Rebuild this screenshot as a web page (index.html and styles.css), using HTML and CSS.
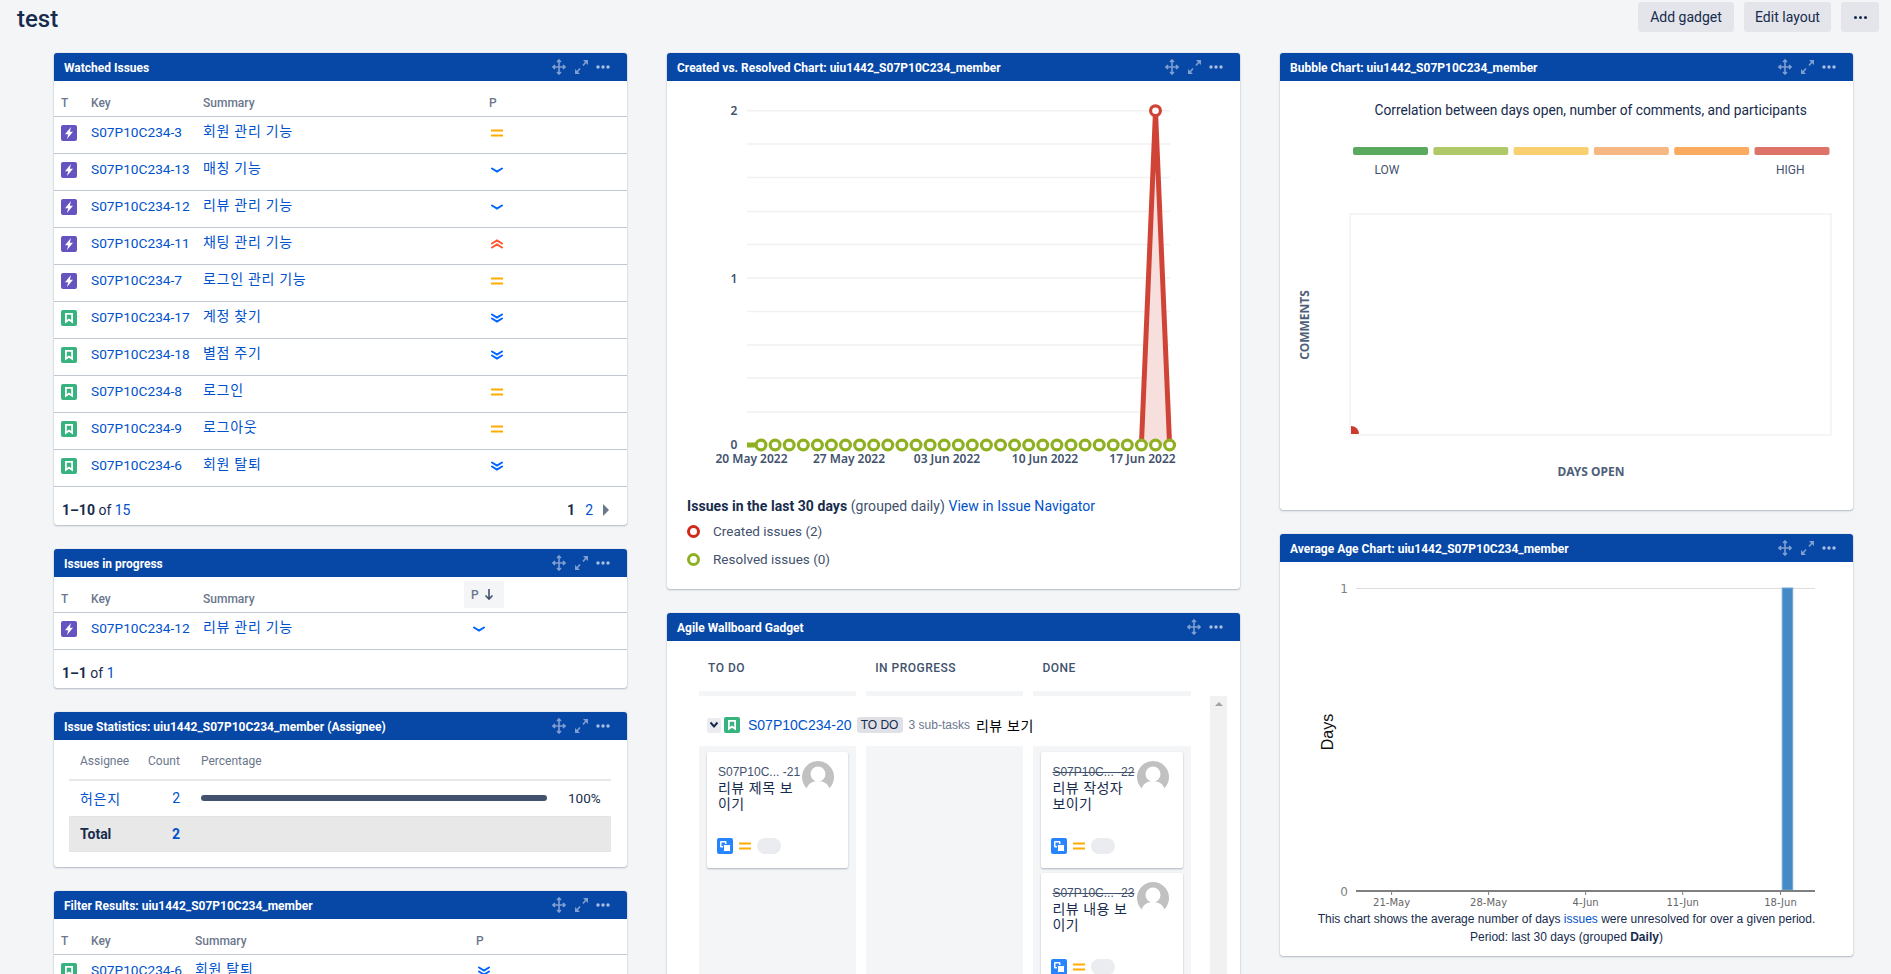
FILE: index.html
```html
<!DOCTYPE html>
<html lang="ko">
<head>
    <meta charset="UTF-8">
    <meta name="viewport" content="width=device-width, initial-scale=1.0">
    <title>test - Dashboard</title>
    <link rel="stylesheet" href="styles.css">
</head>
<body>
    <svg class="icon-defs" aria-hidden="true">
        <symbol id="i-epic" viewBox="0 0 16 16"><rect width="16" height="16" rx="2" fill="#6554c0"/><path d="M10 2 4 9.200h3.200L6 14l6-7.200H8.800z" fill="#fff"/></symbol>
        <symbol id="i-story" viewBox="0 0 16 16"><rect width="16" height="16" rx="2" fill="#36b37e"/><path d="M4 3h8v10.500L8 10.800 4 13.500z" fill="#fff"/><path d="M5.800 4.700h4.400v5.300L8 8.500 5.800 10z" fill="#36b37e"/></symbol>
        <symbol id="i-sub" viewBox="0 0 16 16"><rect width="16" height="16" rx="2" fill="#2684ff"/><rect x="3" y="3" width="6.500" height="6.500" rx="1" fill="#fff"/><rect x="4.500" y="4.500" width="3.500" height="3.500" fill="#2684ff"/><rect x="6.500" y="6.500" width="7" height="7" rx="1" fill="#fff" stroke="#2684ff"/></symbol>
        <symbol id="p-medium" viewBox="0 0 12 12"><path d="M0 2.500h12v2H0zM0 7.500h12v2H0z" fill="#ffab00"/></symbol>
        <symbol id="p-low" viewBox="0 0 12 12"><path d="M1 4.500l5 3 5-3" fill="none" stroke="#0065ff" stroke-width="2" stroke-linecap="round"/></symbol>
        <symbol id="p-lowest" viewBox="0 0 12 12"><path d="M1 2.500l5 3 5-3M1 6.500l5 3 5-3" fill="none" stroke="#0065ff" stroke-width="2" stroke-linecap="round"/></symbol>
        <symbol id="p-highest" viewBox="0 0 12 12"><path d="M1 5.500l5-3 5 3M1 9.500l5-3 5 3" fill="none" stroke="#ff5630" stroke-width="2" stroke-linecap="round"/></symbol>
        <symbol id="h-move" viewBox="0 0 14 16"><path d="M7 1v14M1 8h12M5 3l2-2 2 2M5 13l2 2 2-2M3 6 1 8l2 2M11 6l2 2-2 2" fill="none" stroke="#7f9fd2" stroke-width="1.600"/></symbol>
        <symbol id="h-expand" viewBox="0 0 15 16"><path d="M9 1h5v5zM6 15H1v-5z" fill="#7f9fd2"/><path d="M12 3 9 6.500M3 13l3-3.500" stroke="#7f9fd2" stroke-width="1.600"/></symbol>
        <symbol id="h-dots" viewBox="0 0 14 6"><circle cx="2" cy="3" r="1.700" fill="#a9bfe2"/><circle cx="7" cy="3" r="1.700" fill="#a9bfe2"/><circle cx="12" cy="3" r="1.700" fill="#a9bfe2"/></symbol>
        <symbol id="avatar" viewBox="0 0 32 32"><circle cx="16" cy="16" r="16" fill="#c1c1c1"/><circle cx="16" cy="13" r="7.500" fill="#fff"/><path d="M4 32c0-8 5-12 12-12s12 4 12 12z" fill="#fff"/></symbol>
    </svg>

    <div class="page">
        <div class="top-bar">
            <h1>test</h1>
            <div class="top-actions">
                <button class="btn btn-add">Add gadget</button>
                <button class="btn btn-edit">Edit layout</button>
                <button class="btn btn-more"><span class="more-dots"></span></button>
            </div>
        </div>

        <div class="columns">
            <div class="column">
                <section class="gadget">
                    <div class="gadget-head">
                        <h2>Watched Issues</h2>
                        <svg class="hi-move"><use href="#h-move"/></svg><svg class="hi-expand"><use href="#h-expand"/></svg><svg class="hi-dots"><use href="#h-dots"/></svg>
                    </div>
                    <table class="issues">
                        <colgroup><col class="c-t"><col class="c-key"><col class="c-sum"><col></colgroup>
                        <tr><th>T</th><th>Key</th><th>Summary</th><th>P</th></tr>
                        <tr><td><svg class="type"><use href="#i-epic"/></svg></td><td><a>S07P10C234-3</a></td><td><a class="ko">회원 관리 기능</a></td><td><svg class="prio"><use href="#p-medium"/></svg></td></tr>
                        <tr><td><svg class="type"><use href="#i-epic"/></svg></td><td><a>S07P10C234-13</a></td><td><a class="ko">매칭 기능</a></td><td><svg class="prio"><use href="#p-low"/></svg></td></tr>
                        <tr><td><svg class="type"><use href="#i-epic"/></svg></td><td><a>S07P10C234-12</a></td><td><a class="ko">리뷰 관리 기능</a></td><td><svg class="prio"><use href="#p-low"/></svg></td></tr>
                        <tr><td><svg class="type"><use href="#i-epic"/></svg></td><td><a>S07P10C234-11</a></td><td><a class="ko">채팅 관리 기능</a></td><td><svg class="prio"><use href="#p-highest"/></svg></td></tr>
                        <tr><td><svg class="type"><use href="#i-epic"/></svg></td><td><a>S07P10C234-7</a></td><td><a class="ko">로그인 관리 기능</a></td><td><svg class="prio"><use href="#p-medium"/></svg></td></tr>
                        <tr><td><svg class="type"><use href="#i-story"/></svg></td><td><a>S07P10C234-17</a></td><td><a class="ko">계정 찾기</a></td><td><svg class="prio"><use href="#p-lowest"/></svg></td></tr>
                        <tr><td><svg class="type"><use href="#i-story"/></svg></td><td><a>S07P10C234-18</a></td><td><a class="ko">별점 주기</a></td><td><svg class="prio"><use href="#p-lowest"/></svg></td></tr>
                        <tr><td><svg class="type"><use href="#i-story"/></svg></td><td><a>S07P10C234-8</a></td><td><a class="ko">로그인</a></td><td><svg class="prio"><use href="#p-medium"/></svg></td></tr>
                        <tr><td><svg class="type"><use href="#i-story"/></svg></td><td><a>S07P10C234-9</a></td><td><a class="ko">로그아웃</a></td><td><svg class="prio"><use href="#p-medium"/></svg></td></tr>
                        <tr><td><svg class="type"><use href="#i-story"/></svg></td><td><a>S07P10C234-6</a></td><td><a class="ko">회원 탈퇴</a></td><td><svg class="prio"><use href="#p-lowest"/></svg></td></tr>
                    </table>
                    <div class="table-foot">
                        <span><b>1–10</b> of <a>15</a></span>
                        <span class="pager"><b>1</b><a>2</a><i class="pager-next"></i></span>
                    </div>
                </section>

                <section class="gadget">
                    <div class="gadget-head">
                        <h2>Issues in progress</h2>
                        <svg class="hi-move"><use href="#h-move"/></svg><svg class="hi-expand"><use href="#h-expand"/></svg><svg class="hi-dots"><use href="#h-dots"/></svg>
                    </div>
                    <table class="issues issues-sorted">
                        <colgroup><col class="c-t"><col class="c-key"><col class="c-sum-s"><col></colgroup>
                        <tr><th>T</th><th>Key</th><th>Summary</th><th><span class="sorted">P <svg width="10" height="13" viewBox="0 0 10 13"><path d="M5 1v10M1.500 7.500 5 11l3.500-3.500" fill="none" stroke="#42526e" stroke-width="1.600"/></svg></span></th></tr>
                        <tr><td><svg class="type"><use href="#i-epic"/></svg></td><td><a>S07P10C234-12</a></td><td><a class="ko">리뷰 관리 기능</a></td><td class="p-sorted"><svg class="prio"><use href="#p-low"/></svg></td></tr>
                    </table>
                    <div class="table-foot">
                        <span><b>1–1</b> of <a>1</a></span>
                    </div>
                </section>

                <section class="gadget">
                    <div class="gadget-head">
                        <h2>Issue Statistics: uiu1442_S07P10C234_member (Assignee)</h2>
                        <svg class="hi-move"><use href="#h-move"/></svg><svg class="hi-expand"><use href="#h-expand"/></svg><svg class="hi-dots"><use href="#h-dots"/></svg>
                    </div>
                    <div class="stats">
                        <div class="stats-row stats-head"><span>Assignee</span><span>Count</span><span>Percentage</span></div>
                        <div class="stats-row stats-body"><a class="ko">허은지</a><a class="num">2</a><span class="bar"></span><span class="pct">100%</span></div>
                        <div class="stats-row stats-total"><b>Total</b><a class="num"><b>2</b></a></div>
                    </div>
                </section>

                <section class="gadget">
                    <div class="gadget-head">
                        <h2>Filter Results: uiu1442_S07P10C234_member</h2>
                        <svg class="hi-move"><use href="#h-move"/></svg><svg class="hi-expand"><use href="#h-expand"/></svg><svg class="hi-dots"><use href="#h-dots"/></svg>
                    </div>
                    <table class="issues">
                        <colgroup><col class="c-t"><col class="c-key-f"><col class="c-sum-f"><col></colgroup>
                        <tr><th>T</th><th>Key</th><th>Summary</th><th>P</th></tr>
                        <tr><td><svg class="type"><use href="#i-story"/></svg></td><td><a>S07P10C234-6</a></td><td><a class="ko">회원 탈퇴</a></td><td><svg class="prio"><use href="#p-lowest"/></svg></td></tr>
                    </table>
                </section>
            </div>

            <div class="column">
                <section class="gadget">
                    <div class="gadget-head">
                        <h2>Created vs. Resolved Chart: uiu1442_S07P10C234_member</h2>
                        <svg class="hi-move"><use href="#h-move"/></svg><svg class="hi-expand"><use href="#h-expand"/></svg><svg class="hi-dots"><use href="#h-dots"/></svg>
                    </div>
                    <svg class="chart-created" width="573" height="400" viewBox="0 0 573 400">
                        <g stroke="#f1f1f1" stroke-width="1.500">
                            <path d="M80 29.700H503M80 63H503M80 96.500H503M80 130.400H503M80 163.600H503M80 197H503M80 230.400H503M80 264H503M80 297H503M80 331H503"/>
                        </g>
                        <polygon points="474.400,364 488.500,30 502.600,364" fill="#f6dfdd"/>
                        <polyline points="474.400,364 488.500,30 502.600,364" fill="none" stroke="#d04437" stroke-width="5"/>
                        <circle cx="488.500" cy="29.700" r="4.900" fill="#fff" stroke="#d04437" stroke-width="3.200"/>
                        <path d="M80 364H94" stroke="#8eb021" stroke-width="5"/>
                        <g fill="#fff" stroke="#8eb021" stroke-width="3.200">
                            <circle cx="94" cy="364" r="4.900"/><circle cx="108.100" cy="364" r="4.900"/><circle cx="122.200" cy="364" r="4.900"/><circle cx="136.300" cy="364" r="4.900"/><circle cx="150.400" cy="364" r="4.900"/><circle cx="164.400" cy="364" r="4.900"/>
                            <circle cx="178.500" cy="364" r="4.900"/><circle cx="192.600" cy="364" r="4.900"/><circle cx="206.700" cy="364" r="4.900"/><circle cx="220.800" cy="364" r="4.900"/><circle cx="234.900" cy="364" r="4.900"/><circle cx="249" cy="364" r="4.900"/>
                            <circle cx="263.100" cy="364" r="4.900"/><circle cx="277.200" cy="364" r="4.900"/><circle cx="291.300" cy="364" r="4.900"/><circle cx="305.300" cy="364" r="4.900"/><circle cx="319.400" cy="364" r="4.900"/><circle cx="333.500" cy="364" r="4.900"/>
                            <circle cx="347.600" cy="364" r="4.900"/><circle cx="361.700" cy="364" r="4.900"/><circle cx="375.800" cy="364" r="4.900"/><circle cx="389.900" cy="364" r="4.900"/><circle cx="404" cy="364" r="4.900"/><circle cx="418.100" cy="364" r="4.900"/>
                            <circle cx="432.200" cy="364" r="4.900"/><circle cx="446.200" cy="364" r="4.900"/><circle cx="460.300" cy="364" r="4.900"/><circle cx="474.400" cy="364" r="4.900"/><circle cx="488.500" cy="364" r="4.900"/><circle cx="502.600" cy="364" r="4.900"/>
                        </g>
                        <g class="chart-y" text-anchor="middle">
                            <text x="67" y="34">2</text><text x="67" y="201.500">1</text><text x="67" y="368">0</text>
                        </g>
                        <g class="chart-x" text-anchor="middle">
                            <text x="84.500" y="382">20 May 2022</text><text x="182" y="382">27 May 2022</text><text x="280" y="382">03 Jun 2022</text><text x="378" y="382">10 Jun 2022</text><text x="475.500" y="382">17 Jun 2022</text>
                        </g>
                    </svg>
                    <div class="chart-legend">
                        <p><b>Issues in the last 30 days</b> <span>(grouped daily)</span> <a>View in Issue Navigator</a></p>
                        <p class="legend-item"><i class="dot dot-red"></i>Created issues (2)</p>
                        <p class="legend-item"><i class="dot dot-green"></i>Resolved issues (0)</p>
                    </div>
                </section>

                <section class="gadget">
                    <div class="gadget-head">
                        <h2>Agile Wallboard Gadget</h2>
                        <svg class="hi-move"><use href="#h-move"/></svg><svg class="hi-dots"><use href="#h-dots"/></svg>
                    </div>
                    <div class="wallboard">
                        <div class="wb-cols wb-heads">
                            <div>TO DO</div><div>IN PROGRESS</div><div>DONE</div>
                        </div>
                        <div class="wb-main">
                            <div class="wb-lanes">
                                <div class="swimlane">
                                    <span class="toggle"><svg width="10" height="8" viewBox="0 0 10 8"><path d="M1.500 1.500 5 5.500l3.500-4" fill="none" stroke="#172b4d" stroke-width="2"/></svg></span>
                                    <svg class="type"><use href="#i-story"/></svg>
                                    <a class="lane-key">S07P10C234-20</a>
                                    <span class="lane-status">TO DO</span>
                                    <span class="lane-subs">3 sub-tasks</span>
                                    <span class="lane-sum">리뷰 보기</span>
                                </div>
                                <div class="wb-cols wb-cells">
                                    <div class="wb-cell">
                                        <div class="wb-card">
                                            <div class="wb-key">S07P10C... -21</div>
                                            <div class="wb-sum">리뷰 제목 보<br>이기</div>
                                            <svg class="wb-avatar"><use href="#avatar"/></svg>
                                            <div class="wb-foot"><svg class="type"><use href="#i-sub"/></svg><svg class="prio"><use href="#p-medium"/></svg><span class="pill"></span></div>
                                        </div>
                                    </div>
                                    <div class="wb-cell"></div>
                                    <div class="wb-cell">
                                        <div class="wb-card">
                                            <div class="wb-key wb-done">S07P10C... -22</div>
                                            <div class="wb-sum">리뷰 작성자<br>보이기</div>
                                            <svg class="wb-avatar"><use href="#avatar"/></svg>
                                            <div class="wb-foot"><svg class="type"><use href="#i-sub"/></svg><svg class="prio"><use href="#p-medium"/></svg><span class="pill"></span></div>
                                        </div>
                                        <div class="wb-card">
                                            <div class="wb-key wb-done">S07P10C... -23</div>
                                            <div class="wb-sum">리뷰 내용 보<br>이기</div>
                                            <svg class="wb-avatar"><use href="#avatar"/></svg>
                                            <div class="wb-foot"><svg class="type"><use href="#i-sub"/></svg><svg class="prio"><use href="#p-medium"/></svg><span class="pill"></span></div>
                                        </div>
                                    </div>
                                </div>
                            </div>
                            <div class="wb-scroll"><i></i></div>
                        </div>
                    </div>
                </section>
            </div>

            <div class="column">
                <section class="gadget">
                    <div class="gadget-head">
                        <h2>Bubble Chart: uiu1442_S07P10C234_member</h2>
                        <svg class="hi-move"><use href="#h-move"/></svg><svg class="hi-expand"><use href="#h-expand"/></svg><svg class="hi-dots"><use href="#h-dots"/></svg>
                    </div>
                    <svg class="chart-bubble" width="573" height="429" viewBox="0 0 573 429">
                        <text class="bubble-title" x="94.500" y="34">Correlation between days open, number of comments, and participants</text>
                        <rect x="73" y="66" width="75" height="8" rx="2" fill="#5ba85f"/>
                        <rect x="153.300" y="66" width="75" height="8" rx="2" fill="#b0c968"/>
                        <rect x="233.600" y="66" width="75" height="8" rx="2" fill="#f8d06f"/>
                        <rect x="313.900" y="66" width="75" height="8" rx="2" fill="#f6b883"/>
                        <rect x="394.200" y="66" width="75" height="8" rx="2" fill="#fbab60"/>
                        <rect x="474.500" y="66" width="75" height="8" rx="2" fill="#dd7369"/>
                        <text class="bubble-scale" x="94.500" y="93">LOW</text>
                        <text class="bubble-scale" x="496" y="93">HIGH</text>
                        <path d="M71 353V345A8 8 0 0 1 79 353Z" fill="#cb3a2e"/>
                        <rect x="70" y="133" width="481" height="221" fill="none" stroke="#f5f5f5" stroke-width="2"/>
                        <text class="bubble-axis" x="311" y="395" text-anchor="middle">DAYS OPEN</text>
                        <text class="bubble-axis" transform="translate(29 244) rotate(-90)" text-anchor="middle">COMMENTS</text>
                    </svg>
                </section>

                <section class="gadget">
                    <div class="gadget-head">
                        <h2>Average Age Chart: uiu1442_S07P10C234_member</h2>
                        <svg class="hi-move"><use href="#h-move"/></svg><svg class="hi-expand"><use href="#h-expand"/></svg><svg class="hi-dots"><use href="#h-dots"/></svg>
                    </div>
                    <svg class="chart-age" width="573" height="348" viewBox="0 0 573 348">
                        <path d="M76 26.500H535" stroke="#ddd"/>
                        <rect x="502.200" y="26" width="10.500" height="302" fill="#4589c6" stroke="#6da7d8"/>
                        <path d="M76 329H535" stroke="#808080" stroke-width="2"/>
                        <path d="M111.600 330v3M208.600 330v3M305.600 330v3M402.700 330v3M500.500 330v3" stroke="#808080"/>
                        <g class="age-y" text-anchor="end"><text x="68" y="31">1</text><text x="68" y="334">0</text></g>
                        <g class="age-x" text-anchor="middle">
                            <text x="111.600" y="344">21-May</text><text x="208.600" y="344">28-May</text><text x="305.600" y="344">4-Jun</text><text x="402.700" y="344">11-Jun</text><text x="500.500" y="344">18-Jun</text>
                        </g>
                        <text class="age-label" transform="translate(53 170) rotate(-90)" text-anchor="middle">Days</text>
                    </svg>
                    <div class="age-caption">
                        <div>This chart shows the average number of days <a>issues</a> were unresolved for over a given period.</div>
                        <div>Period: last 30 days (grouped <b>Daily</b>)</div>
                    </div>
                </section>
            </div>
        </div>
    </div>
</body>
</html>
```

FILE: styles.css
```css
* {
    box-sizing: border-box;
}
html, body {
    margin: 0;
    height: 100%;
}
body {
    background-color: #f4f5f7;
    color: #172b4d;
    font-family: Roboto, "Noto Sans CJK KR", sans-serif;
    font-size: 14px;
}
a {
    color: #0052cc;
}
.icon-defs {
    display: none;
}
.page {
    height: 974px;
    overflow: hidden;
}

/* top bar */
.top-bar {
    display: flex;
    justify-content: space-between;
    height: 53px;
    padding: 2px 12px 0 17px;
}
.top-bar h1 {
    margin: 0;
    font-size: 24px;
    font-weight: 500;
    line-height: 34px;
}
.top-actions {
    display: flex;
    gap: 10px;
}
.btn {
    height: 30px;
    padding: 0;
    border: none;
    border-radius: 3px;
    background-color: #e3e5ea;
    color: #172b4d;
    font: inherit;
}
.btn-add {
    width: 96px;
}
.btn-edit {
    width: 87px;
}
.btn-more {
    width: 38px;
}
.more-dots {
    display: block;
    width: 3px;
    height: 3px;
    margin: 0 auto;
    border-radius: 50%;
    background-color: #172b4d;
    box-shadow: -5px 0 0 #172b4d, 5px 0 0 #172b4d;
}

/* columns */
.columns {
    display: flex;
    gap: 40px;
    padding-left: 54px;
}
.column {
    display: flex;
    flex-direction: column;
    gap: 24px;
    width: 573px;
}
.gadget {
    border-radius: 3px;
    background-color: #fff;
    box-shadow: 0 1px 2px rgba(9, 30, 66, 0.25), 0 0 1px rgba(9, 30, 66, 0.3);
}
.gadget-head {
    display: flex;
    align-items: center;
    height: 28px;
    padding: 0 17px 0 10px;
    border-radius: 3px 3px 0 0;
    background-color: #0747a6;
}
.gadget-head h2 {
    flex: 1;
    margin: 0;
    padding-top: 2px;
    color: #fff;
    font-size: 12px;
    font-weight: 700;
}
.hi-move {
    width: 14px;
    height: 16px;
    margin-right: 8px;
}
.hi-expand {
    width: 15px;
    height: 16px;
    margin-right: 7px;
}
.hi-dots {
    width: 14px;
    height: 6px;
}

/* issue tables */
.issues {
    width: 100%;
    table-layout: fixed;
    border-collapse: separate;
    border-spacing: 0;
}
.c-t {
    width: 37px;
}
.c-key {
    width: 112px;
}
.c-sum {
    width: 286px;
}
.c-sum-s {
    width: 261px;
}
.c-key-f {
    width: 104px;
}
.c-sum-f {
    width: 281px;
}
.issues th {
    height: 36px;
    padding: 8px 0 0;
    border-bottom: 1px solid #c1c7d0;
    color: #6b778c;
    font-size: 12px;
    font-weight: 500;
    text-align: left;
}
.issues th:first-child, .issues td:first-child {
    padding-left: 7px;
}
.issues td {
    height: 37px;
    padding: 5px 0 0;
    border-bottom: 1px solid #c1c7d0;
    vertical-align: top;
    font-size: 13.700px;
    line-height: 20px;
}
.issues td:nth-child(3) {
    padding-top: 4px;
    font-size: 14px;
}
.ko {
    letter-spacing: 0.7px;
}
.type {
    display: block;
    flex: none;
    width: 16px;
    height: 16px;
    margin-top: 3px;
}
.prio {
    display: block;
    width: 12px;
    height: 12px;
    margin: 5px 0 0 2px;
}
.sorted {
    display: flex;
    align-items: center;
    gap: 5px;
    width: 40px;
    height: 27px;
    margin: -8px 0 0;
    padding: 0 0 0 7px;
    background-color: #f4f5f7;
}
.issues td.p-sorted {
    padding-left: 7px;
}
.table-foot {
    display: flex;
    justify-content: space-between;
    align-items: center;
    height: 38px;
    padding: 8px 18px 0 8px;
}
.table-foot a {
    color: #0052cc;
}
.pager {
    display: flex;
    align-items: center;
    gap: 10px;
}
.pager-next {
    width: 0;
    height: 0;
    border-top: 6px solid transparent;
    border-bottom: 6px solid transparent;
    border-left: 6px solid #6b778c;
}

/* issue statistics */
.stats {
    height: 127px;
    padding: 0 16px 0 15px;
}
.stats-row {
    display: grid;
    grid-template-columns: 68px 32px 21px 346px 1fr;
    align-items: center;
    padding-left: 11px;
}
.stats-head {
    grid-template-columns: 68px 53px 1fr;
    height: 41px;
    padding-top: 2px;
    border-bottom: 2px solid #e8e8e8;
    color: #6b778c;
    font-size: 12px;
}
.stats-body {
    height: 35px;
    padding-bottom: 2px;
}
.stats-total {
    height: 36px;
    border-top: 1px solid #e4e4e4;
    border-bottom: 1px solid #e4e4e4;
    background-color: #e8e8e8;
}
.num {
    text-align: right;
}
.bar {
    grid-column: 4;
    height: 6px;
    border-radius: 3px;
    background-color: #42526e;
}
.pct {
    padding-left: 21px;
    font-size: 13.500px;
}

/* created vs resolved */
.chart-created, .chart-bubble, .chart-age {
    display: block;
}
.chart-y text {
    fill: #42526e;
    font: 600 12px "Noto Sans", sans-serif;
}
.chart-x text {
    fill: #42526e;
    font: 600 12px "Noto Sans", sans-serif;
}
.chart-legend {
    padding: 15px 20px 20px;
    font-size: 14px;
    letter-spacing: 0.05px;
}
.chart-legend p {
    margin: 0;
    line-height: 20px;
}
.chart-legend span {
    color: #42526e;
}
.chart-legend .legend-item {
    display: flex;
    align-items: center;
    margin-top: 8px;
    color: #42526e;
    font-size: 13.500px;
    letter-spacing: 0;
}
.chart-legend p:nth-child(2) {
    margin-top: 5px;
}
.dot {
    width: 13px;
    height: 13px;
    margin-right: 13px;
    border-radius: 50%;
    border: 3px solid;
}
.dot-red {
    border-color: #d0291c;
}
.dot-green {
    border-color: #8eb021;
}

/* wallboard */
.wallboard {
    padding-left: 32px;
}
.wb-cols {
    display: grid;
    grid-template-columns: repeat(3, 157.200px);
    gap: 10px;
}
.wb-heads {
    height: 55px;
}
.wb-heads div {
    padding: 20px 0 0 9px;
    border-bottom: 5px solid #f4f5f7;
    color: #42526e;
    font-size: 12px;
    font-weight: 500;
    letter-spacing: 0.5px;
}
.wb-main {
    display: flex;
    gap: 19px;
}
.wb-lanes {
    width: 491.600px;
}
.swimlane {
    display: flex;
    align-items: center;
    height: 50px;
    padding: 8px 0 0 8px;
    white-space: nowrap;
    font-family: "Liberation Sans", "Noto Sans CJK KR", sans-serif;
}
.toggle {
    display: flex;
    align-items: center;
    justify-content: center;
    width: 14px;
    height: 15px;
    margin-right: 3px;
    border-radius: 2px;
    background-color: #ebecf0;
}
.swimlane .type {
    margin: 0 8px 0 0;
}
.lane-key {
    margin-right: 5px;
    font-size: 14px;
}
.lane-status {
    width: 46px;
    height: 16px;
    margin-right: 6px;
    border-radius: 3px;
    background-color: #dfe1e6;
    font-size: 12px;
    line-height: 16px;
    text-align: center;
}
.lane-subs {
    margin-right: 6px;
    color: #6b778c;
    font-size: 12px;
}
.lane-sum {
    color: #000;
    letter-spacing: 0.5px;
}
.wb-cell {
    display: flex;
    flex-direction: column;
    gap: 5px;
    min-height: 300px;
    padding: 6px 8px;
    background-color: #f4f5f7;
}
.wb-card {
    position: relative;
    display: flex;
    flex-direction: column;
    flex: none;
    height: 116px;
    padding: 12px 10px 14px;
    border-radius: 2px;
    background-color: #fff;
    box-shadow: 0 1px 2px rgba(9, 30, 66, 0.3);
    font-family: "Liberation Sans", "Noto Sans CJK KR", sans-serif;
}
.wb-key {
    margin-left: 1px;
    color: #42526e;
    font-size: 12px;
    line-height: 16px;
}
.wb-done {
    text-decoration: line-through;
}
.wb-sum {
    margin-left: 1px;
    line-height: 16px;
    letter-spacing: 0.4px;
}
.wb-avatar {
    position: absolute;
    top: 9px;
    right: 14px;
    width: 32px;
    height: 32px;
}
.wb-foot {
    display: flex;
    align-items: center;
    margin-top: auto;
}
.wb-foot .type {
    margin: 0 6px 0 0;
}
.wb-foot .prio {
    margin: 0 6px 0 0;
}
.pill {
    width: 24px;
    height: 16px;
    border-radius: 8px;
    background-color: #ebecf0;
}
.wb-scroll {
    width: 17px;
    padding: 6px 0 0 5px;
    background-color: #f1f1f1;
}
.wb-scroll i {
    display: block;
    width: 0;
    height: 0;
    border-left: 4px solid transparent;
    border-right: 4px solid transparent;
    border-bottom: 4px solid #a3a3a3;
}

/* bubble chart */
.bubble-title {
    fill: #172b4d;
    font: 13.750px Roboto, sans-serif;
}
.bubble-scale {
    fill: #42526e;
    font: 12px Roboto, sans-serif;
}
.bubble-axis {
    fill: #505f79;
    font: 700 12px "Noto Sans", sans-serif;
}

/* average age */
.age-y text {
    fill: #808080;
    font: 12px "DejaVu Sans", sans-serif;
}
.age-x text {
    fill: #666;
    font: 10px "DejaVu Sans", sans-serif;
}
.age-label {
    fill: #111;
    font: 16px "Liberation Sans", sans-serif;
}
.age-caption {
    height: 46px;
    font-family: "Liberation Sans", sans-serif;
    font-size: 12px;
    line-height: 18px;
    text-align: center;
}
```
